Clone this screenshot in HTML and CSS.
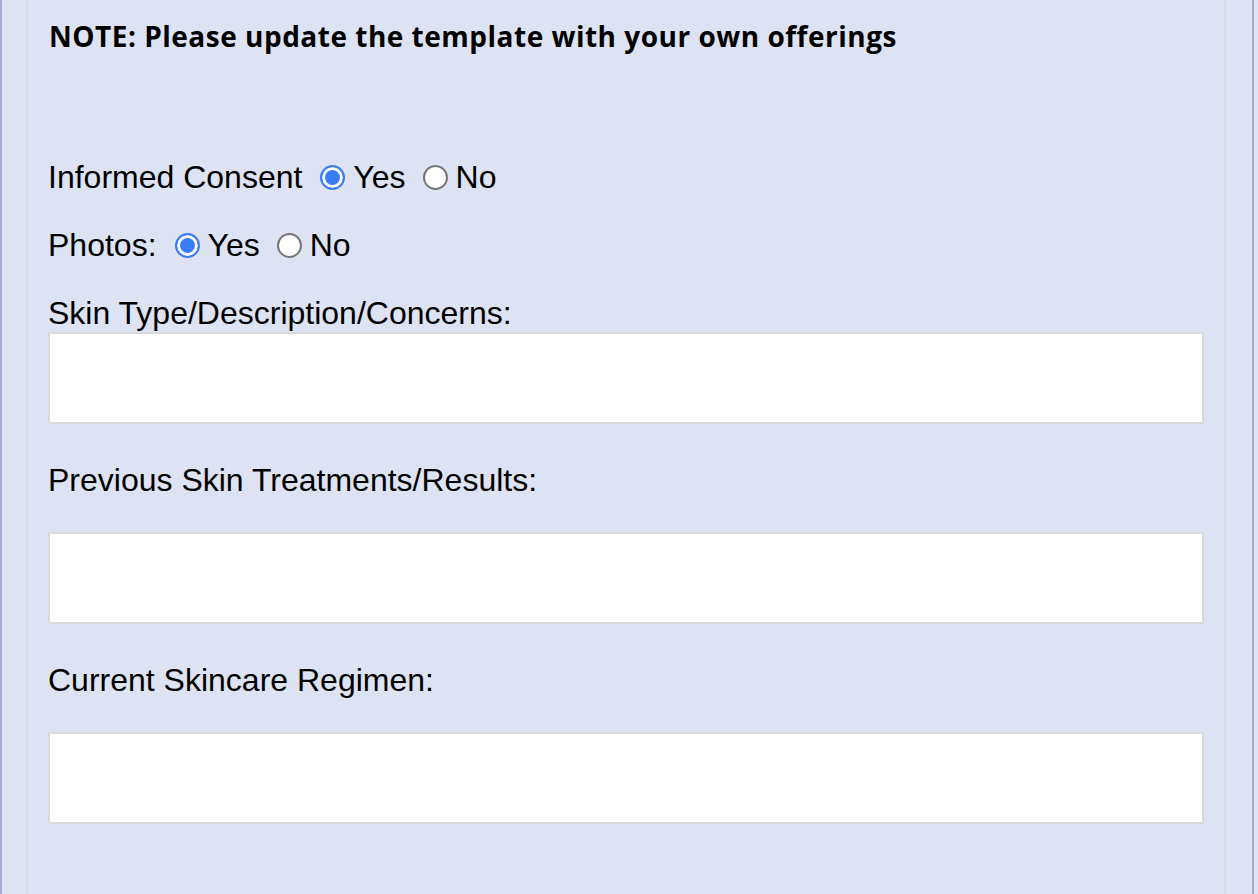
FILE: index.html
```html
<!DOCTYPE html>
<html>
<head>
<meta charset="utf-8">
<link rel="stylesheet" href="styles.css">
</head>
<body>
<div class="page">
  <div class="edge"></div>
  <div class="gutter-l"></div>
  <div class="rule"></div>
  <main class="content">
    <h1 class="note">NOTE: Please update the template with your own offerings</h1>
    <div class="row row-first">
      <span class="label">Informed Consent</span>
      <label class="opt"><input type="radio" name="consent" checked><span>Yes</span></label>
      <label class="opt"><input type="radio" name="consent"><span>No</span></label>
    </div>
    <div class="row">
      <span class="label">Photos:</span>
      <label class="opt"><input type="radio" name="photos" checked><span>Yes</span></label>
      <label class="opt"><input type="radio" name="photos"><span>No</span></label>
    </div>
    <div class="field-label fl-first">Skin Type/Description/Concerns:</div>
    <textarea class="box box-first"></textarea>
    <div class="field-label">Previous Skin Treatments/Results:</div>
    <textarea class="box"></textarea>
    <div class="field-label">Current Skincare Regimen:</div>
    <textarea class="box"></textarea>
  </main>
  <div class="rule"></div>
  <div class="gutter-r"></div>
  <div class="edge"></div>
  <div class="tail"></div>
</div>
</body>
</html>
```
FILE: styles.css
```css
html, body {
  margin: 0;
  padding: 0;
  background: #dde3f3;
}
.page {
  display: flex;
  height: 894px;
  overflow: hidden;
  background: #dde3f3;
  font-family: "Liberation Sans", Arial, sans-serif;
  color: #000;
}
.edge {
  width: 2px;
  flex: none;
  background: #a5aed0;
}
.gutter-l { width: 24px; flex: none; }
.gutter-r { width: 26px; flex: none; }
.tail { width: 4px; flex: none; }
.rule {
  width: 2px;
  flex: none;
  background: #d8dbe3;
}
.content {
  width: 1196px;
  flex: none;
  box-sizing: border-box;
  padding: 20px 20px 0 20px;
  display: flex;
  flex-direction: column;
  align-items: flex-start;
}
.note {
  margin: 0 0 0 1px;
  font-family: "Open Sans", Lato, sans-serif;
  font-weight: 700;
  font-size: 28px;
  letter-spacing: 0.5px;
  line-height: 32px;
  height: 32px;
  white-space: nowrap;
}
.row {
  display: flex;
  align-items: center;
  height: 36px;
  margin-top: 32px;
  font-size: 32px;
  line-height: 36px;
}
.row-first { margin-top: 107px; }
.label { margin-right: 18px; }
.opt {
  display: flex;
  align-items: center;
  margin-right: 17px;
}
.opt input {
  appearance: none;
  -webkit-appearance: none;
  box-sizing: border-box;
  width: 25px;
  height: 25px;
  margin: 0 8px 0 0;
  border-radius: 50%;
  border: 2px solid #777;
  background: #fff;
}
.opt input:checked {
  border-color: #3a7cf5;
  background: #3a7cf5;
  box-shadow: inset 0 0 0 3px #fff;
}
.field-label {
  margin-top: 38px;
  font-size: 32px;
  line-height: 36px;
  height: 36px;
  white-space: nowrap;
}
.fl-first { margin-top: 32px; }
.box {
  display: block;
  box-sizing: border-box;
  width: 1156px;
  height: 92px;
  margin: 34px 0 0 0;
  padding: 0;
  border: 2px solid #dadada;
  background: #fff;
  resize: none;
  outline: none;
}
.box-first { margin-top: 1px; }
```
